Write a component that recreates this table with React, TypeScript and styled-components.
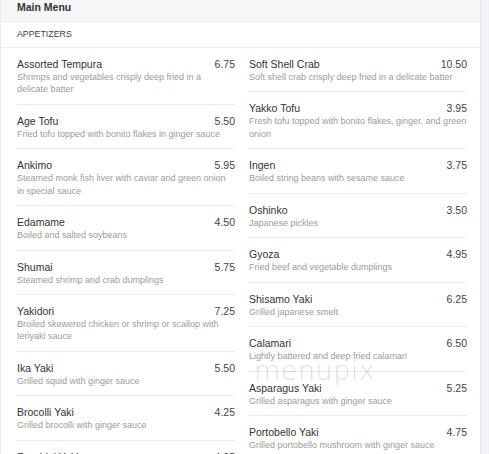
import React from "react";
import styled, { createGlobalStyle } from "styled-components";

type Item = { name: string; price: string; desc: string };

// descriptions keep the reference's line breaks
const leftItems: Item[] = [
  { name: "Assorted Tempura", price: "6.75", desc: "Shrimps and vegetables crisply deep fried in a\ndelicate batter" },
  { name: "Age Tofu", price: "5.50", desc: "Fried tofu topped with bonito flakes in ginger sauce" },
  { name: "Ankimo", price: "5.95", desc: "Steamed monk fish liver with caviar and green onion\nin special sauce" },
  { name: "Edamame", price: "4.50", desc: "Boiled and salted soybeans" },
  { name: "Shumai", price: "5.75", desc: "Steamed shrimp and crab dumplings" },
  { name: "Yakidori", price: "7.25", desc: "Broiled skewered chicken or shrimp or scallop with\nteriyaki sauce" },
  { name: "Ika Yaki", price: "5.50", desc: "Grilled squid with ginger sauce" },
  { name: "Brocolli Yaki", price: "4.25", desc: "Grilled brocolli with ginger sauce" },
  { name: "Zucchini Yaki", price: "4.95", desc: "Grilled zucchini with ginger sauce" },
];

const rightItems: Item[] = [
  { name: "Soft Shell Crab", price: "10.50", desc: "Soft shell crab crisply deep fried in a delicate batter" },
  { name: "Yakko Tofu", price: "3.95", desc: "Fresh tofu topped with bonito flakes, ginger, and green\nonion" },
  { name: "Ingen", price: "3.75", desc: "Boiled string beans with sesame sauce" },
  { name: "Oshinko", price: "3.50", desc: "Japanese pickles" },
  { name: "Gyoza", price: "4.95", desc: "Fried beef and vegetable dumplings" },
  { name: "Shisamo Yaki", price: "6.25", desc: "Grilled japanese smelt" },
  { name: "Calamari", price: "6.50", desc: "Lightly battered and deep fried calamari" },
  { name: "Asparagus Yaki", price: "5.25", desc: "Grilled asparagus with ginger sauce" },
  { name: "Portobello Yaki", price: "4.75", desc: "Grilled portobello mushroom with ginger sauce" },
];

const GlobalStyle = createGlobalStyle`
  html, body {
    margin: 0;
    padding: 0;
    height: 100%;
    overflow: hidden;
    background: #f1f1f5;
  }
  body {
    font-family: "Liberation Sans", Arial, sans-serif;
  }
`;

const Panel = styled.div`
  position: relative;
  width: 481px;
  height: 454px;
  overflow: hidden;
  background: #ffffff;
  border-left: 1px solid #ebebef;
  border-right: 1px solid #e6e6ea;
  box-sizing: border-box;
`;

const Header = styled.div`
  height: 22px;
  box-sizing: border-box;
  padding-left: 16px;
  background: #f6f6f8;
  border-bottom: 1px solid #ececef;
  font-size: 10.5px;
  font-weight: bold;
  line-height: 15px;
  color: #333;
`;

const Section = styled.div`
  height: 26px;
  box-sizing: border-box;
  padding-left: 16px;
  border-bottom: 1px solid #ededed;
  font-size: 8.8px;
  line-height: 25px;
  color: #444;
  text-transform: uppercase;
`;

const Columns = styled.div`
  display: flex;
  gap: 14px;
  padding: 0 13px 0 16px;
`;

const Column = styled.div`
  flex: 0 0 218px;
  display: flex;
  flex-direction: column;
`;

const Row = styled.div`
  padding: 9px 0 8.2px;
  border-bottom: 1px solid #ececec;
`;

const NameLine = styled.div`
  display: flex;
  justify-content: space-between;
  font-size: 10.5px;
  line-height: 14px;
  color: #333;
`;

const Price = styled.span`
  color: #444;
`;

const Desc = styled.div`
  font-size: 9px;
  line-height: 12.3px;
  color: #9c9c9c;
  white-space: pre;
`;

const Watermark = styled.div`
  position: absolute;
  left: 253px;
  top: 356px;
  font-family: "DejaVu Sans", sans-serif;
  font-weight: 200;
  font-size: 27px;
  line-height: 30px;
  letter-spacing: 0.5px;
  color: rgba(150, 150, 150, 0.3);
  pointer-events: none;
`;

const MenuColumn = ({ items }: { items: Item[] }) => (
  <Column>
    {items.map((it) => (
      <Row key={it.name}>
        <NameLine>
          <span>{it.name}</span>
          <Price>{it.price}</Price>
        </NameLine>
        <Desc>{it.desc}</Desc>
      </Row>
    ))}
  </Column>
);

export default function App() {
  return (
    <>
      <GlobalStyle />
      <Panel>
        <Header>Main Menu</Header>
        <Section>Appetizers</Section>
        <Columns>
          <MenuColumn items={leftItems} />
          <MenuColumn items={rightItems} />
        </Columns>
        <Watermark>menupix</Watermark>
      </Panel>
    </>
  );
}
